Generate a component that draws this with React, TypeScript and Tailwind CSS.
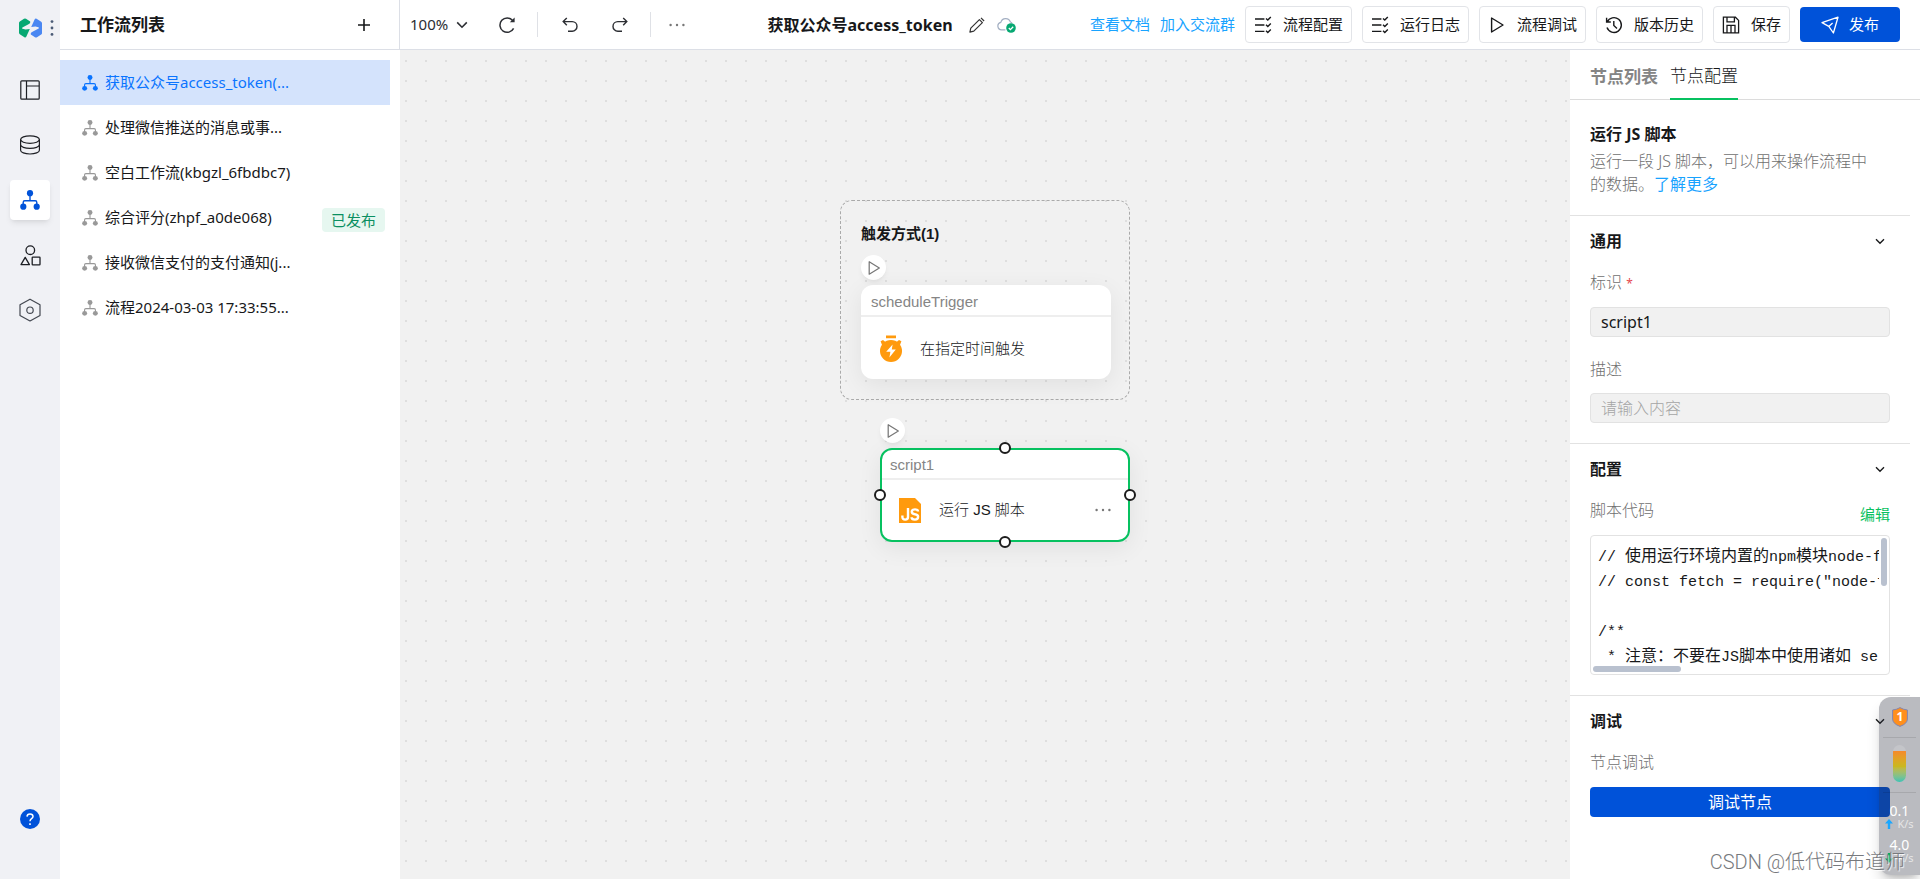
import React, { useState } from "react";

type IconProps = { className?: string };

const Flow = ({ className = "size-4" }: IconProps) => (
  <svg viewBox="0 0 20 20" className={className} fill="none" aria-hidden="true">
    <path d="M10 5v5.5M3.2 15v-2.6q0-1.6 1.6-1.6h10.4q1.6 0 1.6 1.6V15" stroke="currentColor" strokeWidth="1.4" />
    <circle cx="10" cy="3.2" r="3.1" fill="currentColor" />
    <circle cx="3.3" cy="16.7" r="3.1" fill="currentColor" />
    <circle cx="16.7" cy="16.7" r="3.1" fill="currentColor" />
  </svg>
);

const Logo = () => (
  <svg viewBox="0 0 23 20" className="h-5 w-[23px]" aria-hidden="true">
    <path d="M0 4.8Q0 4 .8 3.4L5 .8Q6 .2 7 .8L11.2 3.6Q11.6 5 10.4 5.8L3.4 9.4Q2.4 10.2 3.6 10.8L6.6 11.4 10.8 11 7.4 18.6Q6.6 20 5.4 19.2L.8 16.2Q0 15.6 0 14.8Z" fill="#07a872" />
    <path d="M23 15.2Q23 16 22.2 16.6L18 19.2Q17 19.8 16 19.2L11.8 16.4Q11.4 15 12.6 14.2L19.6 10.6Q20.6 9.8 19.4 9.2L16.4 8.6 12.2 9 15.6 1.4Q16.4 0 17.6.8L22.2 3.8Q23 4.4 23 5.2Z" fill="#4a87f2" />
  </svg>
);

const Layout = () => (
  <svg viewBox="0 0 20 20" className="size-5" fill="none" stroke="currentColor" strokeWidth="1.2" aria-hidden="true">
    <rect x=".8" y=".8" width="18.4" height="18.4" rx="1" />
    <path d="M6.5 1v18M6.5 6H19" />
  </svg>
);

const Database = () => (
  <svg viewBox="0 0 20 20" className="size-5" fill="none" stroke="currentColor" strokeWidth="1.2" aria-hidden="true">
    <ellipse cx="10" cy="4.6" rx="9.4" ry="3.8" />
    <path d="M.6 4.6v10.6c0 2.2 4.2 3.8 9.4 3.8s9.4-1.6 9.4-3.8V4.6M.6 9.6c0 2.2 4.2 3.8 9.4 3.8s9.4-1.6 9.4-3.8" />
  </svg>
);

const Shapes = () => (
  <svg viewBox="0 0 21 21" className="size-[21px]" fill="none" stroke="currentColor" strokeWidth="1.3" aria-hidden="true">
    <circle cx="10.3" cy="5.2" r="4.3" />
    <path d="M5.2 12.4 9.4 19.6H1Z" strokeLinejoin="round" />
    <rect x="12.2" y="12.2" width="7.8" height="7.6" rx=".6" />
  </svg>
);

const Hexagon = () => (
  <svg viewBox="0 0 22 24" className="h-6 w-[22px]" fill="none" stroke="#444851" strokeWidth="1.2" aria-hidden="true">
    <path d="M11 1.2 21 6.8v10.6L11 23 1 17.4V6.8Z" strokeLinejoin="round" />
    <circle cx="11" cy="12.2" r="3.2" />
  </svg>
);

const Help = () => (
  <svg viewBox="0 0 20 20" className="size-5" fill="none" aria-hidden="true">
    <circle cx="10" cy="10" r="10" fill="#0052d9" />
    <path d="M7 7.6Q7.1 4.9 10 4.9t3 2.5q0 1.3-1.5 2.3-1.5 1-1.5 2.6" stroke="#fff" strokeWidth="1.5" />
    <path d="M10 14.2v1.7" stroke="#fff" strokeWidth="1.6" />
  </svg>
);

const Plus = () => (
  <svg viewBox="0 0 12 12" className="size-3" stroke="currentColor" strokeWidth="1.6" aria-hidden="true">
    <path d="M6 0v12M0 6h12" />
  </svg>
);

const Chevron = ({ className = "h-2 w-3" }: IconProps) => (
  <svg viewBox="0 0 12 8" className={className} fill="none" stroke="currentColor" strokeWidth="1.6" aria-hidden="true">
    <path d="m1.2 1.4 4.8 4.8 4.8-4.8" />
  </svg>
);

const Refresh = () => (
  <svg viewBox="0 0 18 18" className="size-[18px]" fill="none" stroke="currentColor" strokeWidth="1.5" aria-hidden="true">
    <path d="M15.6 12.4A7.2 7.2 0 1 1 14.6 4.4" />
    <path d="M16.6 1.4V6.2H11.8Z" fill="currentColor" stroke="none" />
  </svg>
);

const Undo = ({ className = "" }: IconProps) => (
  <svg viewBox="0 0 16 16" className={`size-4 ${className}`} fill="none" stroke="currentColor" strokeWidth="1.4" aria-hidden="true">
    <path d="M4.8 1 1.2 4.6l3.6 3.6M1.4 4.6h8.8a4.8 4.8 0 0 1 0 9.6H6" />
  </svg>
);

const Dots = ({ className = "" }: IconProps) => (
  <svg viewBox="0 0 16 4" className={`h-1 w-4 ${className}`} fill="currentColor" aria-hidden="true">
    <circle cx="1.6" cy="2" r="1.2" />
    <circle cx="8" cy="2" r="1.2" />
    <circle cx="14.4" cy="2" r="1.2" />
  </svg>
);

const Pencil = () => (
  <svg viewBox="0 0 16 16" className="size-4" fill="none" stroke="#333" strokeWidth="1.2" aria-hidden="true">
    <path d="M.9 15.1 1.8 11.2 10.4 2.6l3 3-8.6 8.6ZM12 .9l3.1 3.1" strokeLinejoin="round" />
  </svg>
);

const CloudDone = () => (
  <svg viewBox="0 0 19 16" className="h-4 w-[19px]" fill="none" aria-hidden="true">
    <path d="M8.4 12.8H4.6a3.8 3.8 0 0 1-.8-7.5A5 5 0 0 1 13.4 5a4 4 0 0 1 1.6 1" stroke="#a3afc2" strokeWidth="1.2" />
    <circle cx="14" cy="11" r="4.8" fill="#07a872" />
    <path d="m11.8 11 1.6 1.6 2.8-2.9" stroke="#fff" strokeWidth="1.3" />
  </svg>
);

const Checklist = () => (
  <svg viewBox="0 0 18 18" className="size-[18px]" fill="none" stroke="currentColor" strokeWidth="1.4" aria-hidden="true">
    <path d="M1 3h9.4M1 9h9.4M1 15.4h9.4" />
    <path d="m12 2.4 1.8 1.7 3-3M12 8.8l1.8 1.7 3-3M12 14.8l1.8 1.7 3-3" />
  </svg>
);

const Play = ({ className = "size-[18px]" }: IconProps) => (
  <svg viewBox="0 0 18 18" className={className} fill="none" stroke="currentColor" strokeWidth="1.4" strokeLinejoin="round" aria-hidden="true">
    <path d="M3.6 2v14L15 9Z" />
  </svg>
);

const History = () => (
  <svg viewBox="0 0 18 18" className="size-[18px]" fill="none" stroke="currentColor" strokeWidth="1.4" aria-hidden="true">
    <path d="M2.2 6A7.4 7.4 0 1 1 2 11.6M1.6 1.8V6h4.2M8.8 5v4.4l3.2 3" />
  </svg>
);

const Save = () => (
  <svg viewBox="0 0 18 18" className="size-[18px]" fill="none" stroke="currentColor" strokeWidth="1.3" aria-hidden="true">
    <path d="M1.4 1.2h12l3.2 3.2v12.4H1.4ZM5 1.2v4.6h7.4V1.2M5 16.8V9.4h8v7.4M9 9.4v7.4" />
  </svg>
);

const Plane = () => (
  <svg viewBox="0 0 18 18" className="size-[18px]" fill="none" stroke="currentColor" strokeWidth="1.3" strokeLinejoin="round" aria-hidden="true">
    <path d="M17 1.2 12.4 17 7.8 10.4 1 6.6ZM7.8 10.4 11.6 7" />
  </svg>
);

const Timer = () => (
  <svg viewBox="0 0 22 28" className="h-7 w-[22px]" aria-hidden="true">
    <path d="M6 .6h10v2.6H6ZM.6 6.2 3 5l3 2.4L2.4 11ZM21.4 6.2 19 5l-3 2.4 3.6 3.6Z" fill="#ff9a0d" />
    <circle cx="11" cy="16" r="11" fill="#ff9a0d" />
    <path d="m12.6 9.4-6.4 7.4h4.2L9.4 22.4l6.4-7.8h-4Z" fill="#fff" />
  </svg>
);

const JsFile = () => (
  <svg viewBox="0 0 22 25" className="h-[25px] w-[22px]" fill="none" aria-hidden="true">
    <path d="M0 0h16l6 6v19H0Z" fill="#ff9a0d" />
    <path d="M9 10V19q0 2.6-2.8 2.6T3.4 19v-1.4M19 13.6q0-2.2-3-2.2-3.2 0-3.2 2.4 0 2.1 3.1 2.4 3.2.3 3.2 2.6 0 2.8-3.2 2.8-3.3 0-3.3-2.3" stroke="#fff" strokeWidth="2.4" />
  </svg>
);

const workflows = [
  { name: "获取公众号access_token(...", active: true },
  { name: "处理微信推送的消息或事..." },
  { name: "空白工作流(kbgzl_6fbdbc7)" },
  { name: "综合评分(zhpf_a0de068)", published: true },
  { name: "接收微信支付的支付通知(j..." },
  { name: "流程2024-03-03 17:33:55..." },
];

function Rail() {
  const item = "flex size-10 items-center justify-center rounded text-[#1d1f24]";
  return (
    <nav className="flex w-[60px] shrink-0 flex-col items-center bg-[#f0f1f5] pb-[50px]">
      <div className="flex h-[70px] items-start gap-2 pt-[18px] pl-3">
        <Logo />
        <svg viewBox="0 0 4 16" className="mt-0.5 h-4 w-1" fill="#4b5b76" aria-hidden="true">
          <circle cx="2" cy="1.6" r="1.4" />
          <circle cx="2" cy="8" r="1.4" />
          <circle cx="2" cy="14.4" r="1.4" />
        </svg>
      </div>
      <div className="flex flex-col gap-[15px]">
        <button className={item} aria-label="页面"><Layout /></button>
        <button className={item} aria-label="数据"><Database /></button>
        <button className="flex size-10 items-center justify-center rounded bg-white text-[#0052d9] shadow-md shadow-black/8" aria-label="工作流">
          <Flow className="size-5" />
        </button>
        <button className={item} aria-label="组件"><Shapes /></button>
        <button className={item} aria-label="设置"><Hexagon /></button>
      </div>
      <button className="mt-auto" aria-label="帮助"><Help /></button>
    </nav>
  );
}

function WorkflowList() {
  return (
    <aside className="flex w-[340px] shrink-0 flex-col bg-white">
      <div className="flex h-[50px] items-center justify-between border-r border-b border-[#dcdfe6] pr-[29px] pl-5">
        <h2 className="text-[17px] font-bold">工作流列表</h2>
        <button aria-label="新建工作流"><Plus /></button>
      </div>
      <ul className="flex flex-col pt-2.5 pr-2.5">
        {workflows.map((w) => (
          <li
            key={w.name}
            className={`flex h-[45px] items-center pr-[5px] pl-[22px] text-[15px] ${w.active ? "bg-[#d4e3fc] text-[#0a74ff]" : ""}`}
          >
            <Flow className={w.active ? "size-4 text-[#0a74ff]" : "size-4 text-[#999]"} />
            <a href="#" className="ml-[7px]">{w.name}</a>
            {w.published && (
              <span className="mt-1 ml-auto rounded bg-[#e6f7f0] px-[9px] leading-6 text-[#0a8f61]">已发布</span>
            )}
          </li>
        ))}
      </ul>
    </aside>
  );
}

function ToolButton({ icon, children }: { icon: React.ReactNode; children: React.ReactNode }) {
  return (
    <button className="flex h-[37px] items-center gap-[11px] rounded border border-[#e2e4e8] px-2">
      {icon}
      {children}
    </button>
  );
}

function Toolbar() {
  return (
    <header className="flex h-[50px] shrink-0 items-center justify-between border-b border-[#dcdfe6] bg-white pr-5 pl-2.5 text-[15px] whitespace-nowrap">
      <div className="flex items-center text-[#2c2e33]">
        <button className="flex items-center gap-2">100% <Chevron /></button>
        <button className="ml-[30px]" aria-label="刷新"><Refresh /></button>
        <span className="ml-[21px] h-[25px] w-px bg-[#dfe1e6]" />
        <button className="ml-6" aria-label="撤销"><Undo /></button>
        <button className="ml-[34px]" aria-label="重做"><Undo className="-scale-x-100" /></button>
        <span className="ml-[22px] h-[25px] w-px bg-[#dfe1e6]" />
        <button className="ml-[18px] text-[#777]" aria-label="更多"><Dots /></button>
      </div>
      <div className="flex items-center pl-2">
        <h1 className="text-base font-bold">获取公众号access_token</h1>
        <button className="ml-4" aria-label="重命名"><Pencil /></button>
        <span className="ml-3"><CloudDone /></span>
      </div>
      <div className="flex items-center gap-2.5">
        <a href="#" className="text-[#18a3ff]">查看文档</a>
        <a href="#" className="text-[#18a3ff]">加入交流群</a>
        <ToolButton icon={<Checklist />}>流程配置</ToolButton>
        <ToolButton icon={<Checklist />}>运行日志</ToolButton>
        <ToolButton icon={<Play />}>流程调试</ToolButton>
        <ToolButton icon={<History />}>版本历史</ToolButton>
        <ToolButton icon={<Save />}>保存</ToolButton>
        <button className="flex h-[35px] w-[100px] items-center justify-center gap-2.5 rounded bg-[#0052d9] text-white">
          <Plane />
          发布
        </button>
      </div>
    </header>
  );
}

function RunButton() {
  return (
    <button className="flex size-[25px] items-center justify-center rounded-full bg-white text-[#777] shadow-md shadow-black/5" aria-label="运行">
      <Play className="size-4" />
    </button>
  );
}

function Canvas() {
  const handle = "absolute size-3 rounded-full border-2 border-[#1c1c1c] bg-white";
  return (
    <main className="relative flex-1 overflow-hidden bg-[#f1f1f1] bg-[radial-gradient(circle,#dedede_1px,transparent_1.5px)] bg-[length:20px_20px] bg-[position:-4px_1px] font-['Liberation_Sans','Noto_Sans_CJK_SC',sans-serif] text-[15px]">
      <section className="absolute top-[150px] left-[440px] w-[290px] rounded-xl border border-dashed border-[#aaa] px-5 pt-[21px] pb-5">
        <h3 className="leading-6 font-bold">触发方式(1)</h3>
        <div className="mt-[9px]"><RunButton /></div>
        <div className="mt-[5px] w-[250px] rounded-xl bg-white shadow-[0_6px_24px_rgba(0,0,0,0.07)]">
          <div className="h-8 border-b-2 border-[#eee] px-2.5 leading-[34px] text-[#858585]">scheduleTrigger</div>
          <div className="flex h-[62px] items-center gap-[18px] px-[19px] pt-0.5 font-light">
            <Timer />
            在指定时间触发
          </div>
        </div>
      </section>

      <section className="absolute top-[368px] left-[480px] w-[250px]">
        <RunButton />
        <div className="relative mt-[5px] rounded-xl border-2 border-[#07c160] bg-white shadow-[0_6px_24px_rgba(0,0,0,0.07)]">
          <div className="h-[30px] border-b-2 border-[#eee] px-2 leading-[29px] text-[#858585]">script1</div>
          <div className="flex h-[60px] items-center gap-[18px] px-[17px] font-light">
            <JsFile />
            运行 JS 脚本
            <button className="ml-auto text-[#777]" aria-label="更多"><Dots /></button>
          </div>
          <span className={`${handle} -top-2 left-1/2 -translate-x-1/2`} />
          <span className={`${handle} -bottom-2 left-1/2 -translate-x-1/2`} />
          <span className={`${handle} top-1/2 -left-2 -translate-y-1/2`} />
          <span className={`${handle} top-1/2 -right-2 -translate-y-1/2`} />
        </div>
      </section>
    </main>
  );
}

function SectionTitle({ children }: { children: React.ReactNode }) {
  return (
    <h3>
      <button className="flex w-full items-center justify-between pr-[5px] leading-6 font-bold">
        {children}
        <Chevron className="h-[7px] w-2.5" />
      </button>
    </h3>
  );
}

function ConfigPanel() {
  const [desc, setDesc] = useState("");
  const field = "h-[30px] w-full rounded border border-[#e2e2e2] bg-[#f1f1f1] px-2.5 placeholder:font-light placeholder:text-[#a5a5a5]";
  return (
    <aside className="flex w-[350px] shrink-0 flex-col bg-white">
      <div className="flex h-[50px] gap-3 border-b border-[#dcdcdc] px-5 text-[17px]">
        <button className="pt-1 font-bold text-[#858585]">节点列表</button>
        <button className="-mb-px border-b-2 border-[#07c160] pt-1 font-light">节点配置</button>
      </div>
      <div className="mr-2.5 flex flex-col">
        <section className="border-b border-[#e2e2e2] px-5 pt-[22px] pb-[19px]">
          <h2 className="leading-6 font-bold">运行 JS 脚本</h2>
          <p className="mt-1 pr-3 leading-[23px] font-light text-[#707070]">
            运行一段 JS 脚本，可以用来操作流程中的数据。<a href="#" className="font-normal text-[#18a3ff]">了解更多</a>
          </p>
        </section>

        <section className="border-b border-[#e2e2e2] px-5 pt-[13px] pb-5">
          <SectionTitle>通用</SectionTitle>
          <label htmlFor="node-id" className="mt-[17px] block leading-6 font-light text-[#707070]">
            标识 <span className="text-xs font-normal text-[#e5484d]">*</span>
          </label>
          <input id="node-id" readOnly value="script1" className={`${field} mt-[13px]`} />
          <label htmlFor="node-desc" className="mt-5 block leading-6 font-light text-[#707070]">描述</label>
          <input
            id="node-desc"
            value={desc}
            onChange={(e) => setDesc(e.target.value)}
            placeholder="请输入内容"
            className={`${field} mt-3`}
          />
        </section>

        <section className="border-b border-[#e2e2e2] px-5 pt-[13px] pb-5">
          <SectionTitle>配置</SectionTitle>
          <div className="mt-[17px] flex items-end justify-between leading-6">
            <span className="font-light text-[#707070]">脚本代码</span>
            <button className="mt-1 -mb-1 text-[15px] text-[#07c160]">编辑</button>
          </div>
          <div className="relative mt-[13px] h-[140px] rounded border border-[#e2e2e2] pt-[9px] pr-2.5 pl-[7px]">
            <pre className="overflow-hidden font-['Liberation_Mono','Noto_Sans_CJK_SC',monospace] text-[15px] leading-[25px]">
              <code lang="zh-CN" className="grid grid-rows-[repeat(5,25px)]">
                <span>// <span className="text-base leading-none">使用运行环境内置的</span>npm<span className="text-base leading-none">模块</span>node-fetch</span>
                <span>// const fetch = require("node-fetch");</span>
                <span> </span>
                <span>/**</span>
                <span> * <span className="text-base leading-none">注意：不要在</span>JS<span className="text-base leading-none">脚本中使用诸如</span> setTimeout</span>
              </code>
            </pre>
            <span className="absolute top-0.5 right-0.5 h-12 w-1.5 rounded-full bg-[#b9c1cf]" />
            <span className="absolute bottom-0.5 left-0.5 h-1.5 w-[88px] rounded-full bg-[#b9c1cf]" />
          </div>
        </section>

        <section className="px-5 pt-[13px]">
          <SectionTitle>调试</SectionTitle>
          <p className="mt-[17px] leading-6 font-light text-[#707070]">节点调试</p>
          <button className="mt-[13px] h-[30px] w-full rounded bg-[#0052d9] leading-none text-white">调试节点</button>
        </section>
      </div>
    </aside>
  );
}

function SpeedRow({ value, up }: { value: string; up?: boolean }) {
  return (
    <div className="flex flex-col items-center text-white">
      <span className="text-sm leading-[14px]">{value}</span>
      <span className="flex items-center gap-1 text-[11px] leading-3 text-[#e6e6e6]">
        <svg viewBox="0 0 8 10" className={up ? "h-2.5 w-2 text-[#1aa7ff]" : "h-2.5 w-2 rotate-180 text-[#0fa958]"} fill="currentColor" aria-hidden="true">
          <path d="M4 0 8 4.6H5.2V10H2.8V4.6H0Z" />
        </svg>
        K/s
      </span>
    </div>
  );
}

function NetWidget() {
  return (
    <div className="absolute right-0 bottom-1 flex h-[178px] w-[41px] flex-col items-center rounded-l-xl bg-[#282d3c]/32 px-1 pt-[10px] shadow-lg shadow-black/20">
      <svg viewBox="0 0 16 20" className="h-5 w-4" aria-hidden="true">
        <path d="M8 .6Q11 2.6 15.4 3v9q0 4.6-7.4 7.4Q.6 16.6.6 12V3Q5 2.6 8 .6Z" fill="#ff8f1c" stroke="#7f86b5" strokeWidth="1" />
        <text x="8" y="14.4" textAnchor="middle" fontSize="12" fontWeight="700" fill="#fff">1</text>
      </svg>
      <span className="mt-2.5 h-px w-full bg-black/10" />
      <span className="mt-[7px] flex h-[37px] w-[13px] flex-col overflow-hidden rounded-full bg-white/15 pt-1.5">
        <span className="flex-1 bg-linear-to-b from-[#f5892b] via-[#c9b81f] to-[#35c3b4]" />
      </span>
      <span className="mt-2.5 h-px w-full bg-black/10" />
      <div className="mt-[11px] flex flex-col gap-2">
        <SpeedRow value="0.1" up />
        <SpeedRow value="4.0" />
      </div>
    </div>
  );
}

export default function App() {
  return (
    <div lang="zh-CN" className="relative flex h-screen overflow-hidden bg-white font-['Noto_Sans','Noto_Sans_CJK_SC',sans-serif] text-base text-[#17181a]">
      <Rail />
      <WorkflowList />
      <div className="flex min-w-0 flex-1 flex-col">
        <Toolbar />
        <div className="flex min-h-0 flex-1">
          <Canvas />
          <ConfigPanel />
        </div>
      </div>
      <NetWidget />
      <div className="pointer-events-none absolute right-[15px] bottom-[3px] font-['Roboto','Noto_Sans_CJK_SC',sans-serif] text-xl font-light text-[#77797d] [text-shadow:1px_1px_1px_#fff]">
        CSDN @低代码布道师
      </div>
    </div>
  );
}
